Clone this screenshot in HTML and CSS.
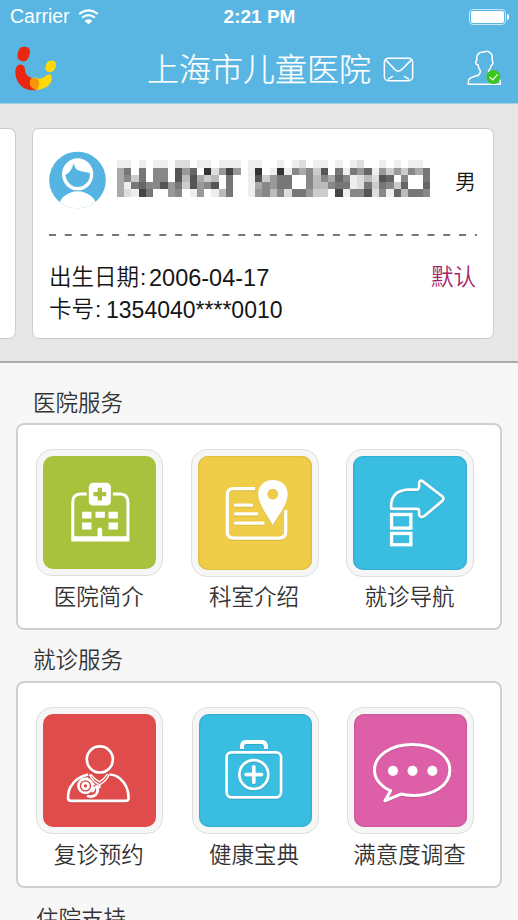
FILE: index.html
```html
<!DOCTYPE html>
<html lang="zh-CN">
<head>
<meta charset="utf-8">
<title>上海市儿童医院</title>
<link rel="stylesheet" href="styles.css">
</head>
<body>
<header class="top">
  <div class="status">
    <div class="carrier"><span>Carrier</span>
      <svg class="wifi" viewBox="238 24 62 48"><g fill="none" stroke="#fff" stroke-width="6.5"><path d="M241 39Q269 17 297 39"/><path d="M250 50Q269 35 288 50"/></g><path d="M257 59Q269 50 281 59L269 70Z" fill="#fff"/></svg>
    </div>
    <div class="time">2:21 PM</div>
    <div class="battery"><i></i></div>
  </div>
  <div class="nav">
    <svg class="logo" viewBox="45 135 126 135">
      <path d="M63 139Q75 134 86 141Q93 149 88 163Q84 178 74 181Q62 182 55 175Q50 165 55 151Q58 142 63 139Z" fill="#e9280f"/>
      <path d="M52 194Q63 186 72 196Q75 203 76 213Q81 227 97 232Q112 230 117 242Q119 258 109 267Q88 270 70 260Q50 247 46 219Q45 202 52 194Z" fill="#e9280f"/>
      <path d="M146 180Q157 176 166 182Q170 190 166 202Q162 212 152 214Q141 214 137 208Q134 200 139 189Q141 183 146 180Z" fill="#ffd90a"/>
      <path d="M96 232Q104 227 116 233Q133 233 138 223Q145 218 154 222Q158 235 151 247Q140 264 109 267Q94 263 90 250Q88 237 96 232Z" fill="#ffd90a"/>
      <path d="M96 232Q112 228 117 241Q120 257 109 267Q94 263 90 250Q88 237 96 232Z" fill="#f8960c"/>
    </svg>
    <h1>上海市儿童医院</h1>
    <svg class="mail" viewBox="373 169 94 76"><g fill="none" stroke="#fff" stroke-width="4.500" stroke-linecap="round"><rect x="377" y="173" width="86" height="68" rx="12"/><path d="M380 177L410 208Q419 215 429 208L460 177M389 236L402 228M451 236L438 228"/></g></svg>
    <svg class="user" viewBox="627 150 105 108"><path d="M631 253V244Q632 234 646 230Q664 227 666 219Q669 211 662 204L661 196Q653 194 653 185L657 180Q654 169 660 163Q665 155 678 156Q688 151 696 158Q705 162 702 180Q707 186 703 194L698 198Q699 207 692 212V219Q694 227 710 230Q725 235 727 244V253Z" fill="none" stroke="#fff" stroke-width="4.500" stroke-linejoin="round"/><circle cx="706" cy="231" r="21" fill="#3cc51b"/><path d="M695 231L704 240L719 223" fill="none" stroke="#fff" stroke-width="3.5"/></svg>
  </div>
</header>

<section class="cards">
  <div class="card prev"></div>
  <div class="card main">
    <div class="who">
      <svg class="avatar" viewBox="145 125 171 174"><defs><clipPath id="disc"><circle cx="230.500" cy="212" r="85"/></clipPath></defs><circle cx="230.500" cy="212" r="85" fill="#55b4e1"/><g clip-path="url(#disc)"><ellipse cx="231" cy="299" rx="59" ry="53" fill="#fff"/></g><ellipse cx="231" cy="195" rx="47" ry="48" fill="#fff"/><path d="M194 197Q213 188 219 162Q223 177 229 181Q243 187 267 190Q270 206 260 218Q248 233 231 233Q213 233 203 219Q196 209 194 197Z" fill="#55b4e1"/></svg>
      <div class="mosaic" id="mosaic"></div>
      <span class="sex">男</span>
    </div>
    <svg class="dash" viewBox="0 0 430 2"><path d="M0 1H428" stroke="#777" stroke-width="2" stroke-dasharray="7 8.770"/></svg>
    <div class="facts">
      <div class="row"><span>出生日期</span><b class="c1">:</b><span class="num">2006-04-17</span><em>默认</em></div>
      <div class="row"><span>卡号</span><b class="c2">:</b><span class="num id">1354040****0010</span></div>
    </div>
  </div>
</section>

<main>
  <h2>医院服务</h2>
  <div class="panel">
    <a class="item"><span class="tile green"><svg viewBox="70 64 338 338"><path d="M201 178H180Q159 180 159 202V315H324V202Q324 180 303 178H279" fill="none" stroke="#fff" stroke-width="9"/><path d="M159 310H324" stroke="#fff" stroke-width="12"/><rect x="207" y="144" width="66" height="68" rx="13" fill="#fff"/><path d="M240 159V197M221 178H259" stroke="#a9c23e" stroke-width="13"/><path d="M187 231H215V251H187ZM227 231H255V249H227ZM266 231H294V251H266ZM187 263H215V284H187ZM266 263H294V284H266ZM233 310V284Q234 278 240 278Q246 278 247 284V310Z" fill="#fff"/></svg></span><span class="label">医院简介</span></a>
    <a class="item"><span class="tile yellow big"><svg viewBox="54 62 343 343"><g class="shade" fill="none" stroke="#fff" stroke-width="10"><path d="M226 160H161Q142 160 142 179V291Q142 309 161 309H298Q318 309 318 291V225"/><path d="M167 210H215M167 236H231M167 264H250" stroke-linecap="round"/></g><path class="shade" fill-rule="evenodd" d="M279 271C268 247 235 209 235 177C235 151 253 134 279 134C306 134 324 152 324 177C324 210 291 247 279 271ZM279 161A16 16 0 1 0 279 193A16 16 0 1 0 279 161Z" fill="#fff"/></svg></span><span class="label">科室介绍</span></a>
    <a class="item"><span class="tile blue big"><svg viewBox="54 62 343 343"><g class="shade" fill="none" stroke="#fff" stroke-width="8" stroke-linejoin="round"><path d="M169 221V207Q172 168 216 163H249Q253 161 253 154V143Q255 132 265 139L323 184Q329 190 323 197L268 243Q257 250 253 239V227Q252 221 246 221Z"/></g><g fill="none" stroke="#fff" stroke-width="10"><rect x="170" y="238" width="58" height="41"/><rect x="170" y="295" width="58" height="34"/></g></svg></span><span class="label">就诊导航</span></a>
  </div>
  <h2 class="second">就诊服务</h2>
  <div class="panel two">
    <a class="item"><span class="tile red"><svg viewBox="70 221 338 338"><g class="shade" fill="none" stroke="#fff" stroke-width="8" stroke-linejoin="round"><circle cx="240" cy="357" r="39"/><path d="M205 402Q169 410 153 438Q145 451 145 472Q145 481 154 481H317Q326 481 326 472Q326 436 300 414Q287 403 269 402"/><circle cx="197" cy="436" r="21"/><circle cx="197" cy="436" r="9"/></g><path d="M209 401Q217 422 239 433Q261 421 268 401M213 402Q223 415 239 424Q255 413 263 400M201 410Q207 423 225 432" fill="none" stroke="#fff" stroke-width="4"/><path d="M202 465Q216 472 227 463Q239 452 229 434" fill="none" stroke="#fff" stroke-width="8"/><path d="M239 431V440L222 441Q225 449 216 454" fill="none" stroke="#fff" stroke-width="6"/></svg></span><span class="label">复诊预约</span></a>
    <a class="item"><span class="tile blue"><svg viewBox="57 57 336 336"><g class="shade" fill="none" stroke="#fff"><rect x="139" y="171" width="162" height="134" rx="15" stroke-width="8"/><circle cx="220" cy="237" r="43" stroke-width="8"/><path d="M185 161V151Q186 140 197 140H243Q254 140 256 151V161" stroke-width="12"/><path d="M220 214V260M197 237H243" stroke-width="11" stroke-linecap="round"/></g></svg></span><span class="label">健康宝典</span></a>
    <a class="item"><span class="tile pink"><svg viewBox="58 57 336 336"><path class="shade" d="M165 285C137 272 119 249 119 224C119 180 169 148 231 148C294 148 343 180 343 224C343 269 292 302 231 299Q213 299 198 295L150 315Q160 298 167 285Z" fill="none" stroke="#fff" stroke-width="9" stroke-linejoin="round"/><g fill="#fff"><circle cx="174" cy="226" r="15"/><circle cx="232" cy="226" r="15"/><circle cx="291" cy="226" r="15"/></g></svg></span><span class="label">满意度调查</span></a>
  </div>
  <h2 class="third">住院支持</h2>
</main>
<script src="script.js"></script>
</body>
</html>
```
FILE: styles.css
```css
* { box-sizing: border-box; }
html, body { height: 100%; }
body {
  margin: 0;
  overflow: hidden;
  background: #f7f7f7;
  color: #333;
  font-family: "Liberation Sans", "Noto Sans CJK SC", sans-serif;
  font-weight: 350;
}
svg { display: block; flex: none; }
.top { height: 104px; background: #59b5e1; color: #fff; border-bottom: 1px solid #a4d0e6; }
.status {
  height: 33px;
  padding: 0 9px 0 10px;
  display: grid;
  grid-template-columns: 1fr auto 1fr;
  align-items: center;
  font-size: 19.5px;
  line-height: 33px;
}
.carrier { display: flex; align-items: center; gap: 8px; }
.wifi { width: 21px; height: 16px; }
.time { font-weight: 700; font-size: 19px; }
.battery {
  justify-self: end;
  position: relative;
  width: 37px;
  height: 16px;
  margin-right: 3px;
  padding: 1px;
  border: 1px solid #c9e6f4;
  border-radius: 4px;
}
.battery i { display: block; height: 12px; background: #fff; border-radius: 2px; }
.battery::after {
  content: "";
  position: absolute;
  right: -4px;
  top: 4px;
  width: 2px;
  height: 6px;
  border-radius: 0 2px 2px 0;
  background: #fff;
}
.nav { height: 70px; display: flex; align-items: center; padding: 0 16px 0 15px; }
.logo { width: 42px; height: 45px; }
.nav h1 {
  margin: -2px 0 0 90px;
  font-family: "Noto Sans CJK SC", sans-serif;
  font-size: 32px;
  line-height: 48px;
  font-weight: 300;
  -webkit-text-stroke: .25px #fff;
}
.mail { width: 31px; height: 25px; margin: 2px 0 0 12px; }
.user { width: 35px; height: 36px; margin-left: auto; }

.cards {
  height: 259px;
  padding-top: 24px;
  display: flex;
  gap: 16px;
  background: #e7e7e7;
  border-bottom: 2px solid #aaa;
}
.card { height: 211px; background: #fff; border: 1px solid #ccc; border-radius: 7px; }
.prev { width: 16px; border-left: 0; border-radius: 0 7px 7px 0; }
.main { width: 462px; padding: 21px 16px 0; color: #151515; }
.who { height: 60px; display: flex; align-items: center; }
.avatar { width: 57px; height: 58px; }
.mosaic {
  width: 313.3px;
  height: 36.500px;
  margin: -3px 0 0 10.700px;
  display: grid;
  grid-template: repeat(5, 1fr) / repeat(43, 1fr);
}
.sex { margin-left: 25px; font: 350 21px/30px "Noto Sans CJK SC", sans-serif; }
.dash { width: 430px; height: 2px; margin-top: 24px; }
.facts { margin-top: 26px; }
.row {
  height: 32px;
  display: flex;
  line-height: 32px;
  font-size: 22.5px;
}
.row b { font-weight: 400; }
.row em { margin-left: auto; margin-right: 1px; font-style: normal; color: #a52468; }
.c1 { width: 10px; padding-left: 1px; }
.c2 { width: 12px; padding-left: 1px; }
.num { font-size: 23.5px; }
.id { font-size: 23px; }

h2 {
  margin: 0;
  padding: 25px 0 0 33px;
  height: 60px;
  font-size: 22.5px;
  line-height: 32px;
  font-weight: 350;
}
.second { height: 51px; padding-top: 15px; }
.third { padding: 16px 0 0 36px; }
.panel {
  width: 486px;
  height: 207px;
  margin-left: 16px;
  padding: 24px 0 0 4px;
  display: grid;
  grid-template-columns: repeat(3, 155.400px);
  background: #fff;
  border: 2px solid #d0d0d0;
  border-radius: 8px;
}
.item {
  display: flex;
  flex-direction: column;
  align-items: center;
  font-size: 22.5px;
  line-height: 44px;
  white-space: nowrap;
}
.label { margin-right: 2px; }
.tile {
  width: 127px;
  height: 127px;
  padding: 6px;
  border: 1px solid #dedede;
  border-radius: 16px;
  background: #f6f6f6;
}
.tile svg { width: 113px; height: 113px; border-radius: 10px; }
.big { width: 128px; height: 128px; margin-bottom: -1px; }
.big svg { width: 114px; height: 114px; }
.shade { filter: drop-shadow(0 2px 1px rgba(0, 0, 0, .15)); }
.green svg { background: #a9c23e; }
.yellow svg { background: #efcd49; box-shadow: inset 0 0 2px #b99c25; }
.blue svg { background: #39bde1; box-shadow: inset 0 0 2px #218fac; }
.red svg { background: #e04b4b; }
.pink svg { background: #dc5fa7; box-shadow: inset 0 0 2px #b34484; }
```
FILE: script.js
```js
// One hex digit per cell, 0 = black, f = white.
const rows = [
  'eefefeefddfeefeeefeeffefedfeefefedffefefeef',
  'a7f7f88f596f3d949fe3fe3e8a8c5f7e796e9c9c8a7',
  'a8c7f88f5b5acbf7ffe5c977ff8b8a68edbd56f8ff7',
  'ae7688597c5985f7ffea8977ff8bb877ed7c78c6ff6',
  'ade47ff98fe9feb7ffe98b8d779ccf4e885d8e6b778'
];
const mosaic = document.getElementById('mosaic');
for (const row of rows) {
  for (const shade of row) {
    const cell = document.createElement('i');
    cell.style.background = '#' + shade.repeat(3);
    mosaic.append(cell);
  }
}
```
